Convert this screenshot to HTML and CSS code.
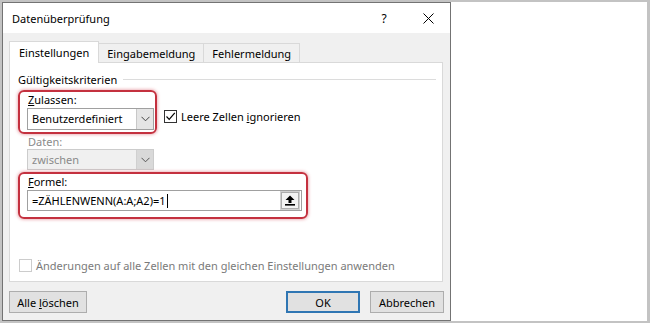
FILE: index.html
```html
<!DOCTYPE html>
<html lang="de">
<head>
    <meta charset="UTF-8" />
    <title>Datenüberprüfung</title>
    <link rel="stylesheet" href="styles.css">
</head>
<body>
    <div class="screen">
        <div class="dialog">
            <div class="titlebar">
                <span class="title">Datenüberprüfung</span>
                <span class="help">?</span>
                <span class="close">
                    <svg width="11" height="11" viewBox="0 0 11 11">
                        <path d="M0.5 0.5 L10.5 10.5 M10.5 0.5 L0.5 10.5" stroke="#000" stroke-width="1" fill="none" />
                    </svg>
                </span>
            </div>

            <div class="tabs">
                <div class="tab active">Einstellungen</div>
                <div class="tab">Eingabemeldung</div>
                <div class="tab">Fehlermeldung</div>
            </div>

            <div class="panel">
                <div class="legend">
                    <span>Gültigkeitskriterien</span>
                    <span class="legend-line"></span>
                </div>

                <div class="allow-row">
                    <div class="mark mark-allow">
                        <div class="label"><u>Z</u>ulassen:</div>
                        <div class="combo">
                            <span class="combo-text">Benutzerdefiniert</span>
                            <span class="combo-arrow">
                                <svg width="9" height="6" viewBox="0 0 9 6"><path d="M0.5 0.8 L4.5 4.8 L8.5 0.8" stroke="#444" fill="none" /></svg>
                            </span>
                        </div>
                    </div>
                    <div class="check">
                        <span class="box checked">
                            <svg width="11" height="11" viewBox="0 0 11 11"><path d="M1.5 5.5 L4.2 8.3 L9.8 1.8" stroke="#000" stroke-width="1.2" fill="none" /></svg>
                        </span>
                        <span>Leere Zellen <u>i</u>gnorieren</span>
                    </div>
                </div>

                <div class="plain">
                    <div class="label disabled">Daten:</div>
                    <div class="combo disabled">
                        <span class="combo-text">zwischen</span>
                        <span class="combo-arrow">
                            <svg width="9" height="6" viewBox="0 0 9 6"><path d="M0.5 0.8 L4.5 4.8 L8.5 0.8" stroke="#555" fill="none" /></svg>
                        </span>
                    </div>
                </div>

                <div class="mark mark-formula">
                    <div class="label"><u>F</u>ormel:</div>
                    <div class="input">
                        <span class="input-text">=ZÄHLENWENN(A:A;A2)=1</span>
                        <span class="caret"></span>
                        <span class="ref-button">
                            <svg width="10" height="11" viewBox="0 0 10 11">
                                <path d="M5 0.5 L9.5 5 L6.5 5 L6.5 8 L3.5 8 L3.5 5 L0.5 5 Z" fill="#000" />
                                <rect x="0" y="9" width="10" height="1.6" fill="#000" />
                            </svg>
                        </span>
                    </div>
                </div>

                <div class="check apply-all">
                    <span class="box disabled"></span>
                    <span>Änderungen auf alle Zellen mit den gleichen Einstellungen anwenden</span>
                </div>
            </div>

            <div class="footer">
                <button class="btn btn-wide">Alle <u>l</u>öschen</button>
                <div class="footer-right">
                    <button class="btn btn-default">OK</button>
                    <button class="btn">Abbrechen</button>
                </div>
            </div>
        </div>
    </div>
</body>
</html>
```

FILE: styles.css
```css
body,
html {
    margin: 0;
    background: #ffffff;
    font-family: "Noto Sans", "Open Sans", sans-serif;
    font-size: 11px;
    color: #000;
}

.screen {
    width: 650px;
    height: 323px;
    box-sizing: border-box;
    border: 2px solid #c3c3c3;
    border-right-width: 3px;
    background: #fff;
    display: flex;
}

.dialog {
    width: 449px;
    height: 319px;
    box-sizing: border-box;
    border: 1px solid #737373;
    background: #f0f0f0;
    display: flex;
    flex-direction: column;
}

/* titelleiste */
.titlebar {
    height: 30px;
    background: #fff;
    display: flex;
    align-items: center;
}

.title {
    padding-left: 9px;
    font-size: 11px;
}

.help,
.close {
    width: 44px;
    height: 30px;
    display: flex;
    align-items: center;
    justify-content: center;
}

.help {
    margin-left: auto;
    font-size: 12px;
}

/* reiter */
.tabs {
    display: flex;
    align-items: flex-end;
    padding-left: 6px;
    margin-top: 8px;
}

.tab {
    height: 19px;
    box-sizing: border-box;
    padding: 0 8px;
    display: flex;
    align-items: center;
    border: 1px solid #d9d9d9;
    border-bottom: none;
    background: #f0f0f0;
}

.tab + .tab {
    border-left: none;
}

.tab.active {
    height: 22px;
    padding: 0 9px;
    background: #fff;
    margin-bottom: -1px;
    position: relative;
    z-index: 1;
}

.panel {
    height: 220px;
    box-sizing: border-box;
    margin: 0 7px 0 6px;
    border: 1px solid #d9d9d9;
    background: #fff;
    display: flex;
    flex-direction: column;
}

.legend {
    display: flex;
    align-items: center;
    height: 16px;
    margin: 8px 6px 0 8px;
}

.legend-line {
    flex: 1;
    height: 1px;
    margin-left: 6px;
    background: #dcdcdc;
}

.label {
    height: 15px;
    line-height: 15px;
    padding-left: 1px;
}

.label.disabled {
    color: #8a8a8a;
}

.mark {
    border: 2px solid #c4313f;
    border-radius: 6px;
    box-shadow: 0 0 3px 1px rgba(214, 80, 95, 0.4);
    padding: 0 1px 2px 7px;
}

.mark .label {
    margin-bottom: 1px;
}

.allow-row {
    display: flex;
    align-items: flex-end;
    margin: 3px 0 0 8px;
}

.mark-allow {
    width: 127px;
}

.mark-formula {
    width: 275px;
    margin: 2px 0 0 8px;
    padding: 0 4px 6px 7px;
}

.combo {
    height: 22px;
    box-sizing: border-box;
    border: 1px solid #a0a0a0;
    background: #fff;
    display: flex;
}

.combo-text {
    flex: 1;
    padding-left: 4px;
    line-height: 20px;
}

.combo-arrow {
    width: 16px;
    border-left: 1px solid #c8c8c8;
    background: #e5e5e5;
    display: flex;
    align-items: center;
    justify-content: center;
}

.combo.disabled {
    height: 21px;
    border-color: #cccccc;
    background: #f0f0f0;
    color: #8a8a8a;
}

.combo.disabled .combo-text {
    line-height: 19px;
}

.combo.disabled .combo-arrow {
    background: #d9d9d9;
    border-left-color: #d0d0d0;
}

.plain {
    margin-left: 17px;
    width: 127px;
}

.input {
    height: 21px;
    box-sizing: border-box;
    border: 1px solid #a0a0a0;
    background: #fff;
    display: flex;
    align-items: center;
}

.input-text {
    padding-left: 4px;
}

.caret {
    width: 1px;
    height: 14px;
    margin-left: 1px;
    background: #000;
}

.ref-button {
    margin-left: auto;
    margin-right: 2px;
    width: 16px;
    height: 15px;
    border: 1px solid #adadad;
    outline: 1px solid #d0d0d0;
    background: #f3f3f3;
    display: flex;
    align-items: center;
    justify-content: center;
}

/* kontrollkaestchen */
.check {
    display: flex;
    align-items: center;
    height: 16px;
    gap: 4px;
}

.allow-row .check {
    margin: 0 0 10px 7px;
}

.box {
    width: 13px;
    height: 13px;
    box-sizing: border-box;
    border: 1px solid #333;
    background: #fff;
    display: flex;
    align-items: center;
    justify-content: center;
}

.box.disabled {
    border-color: #cccccc;
}

.apply-all {
    margin: 38px 0 0 9px;
    color: #7a7a7a;
}

/* schaltflaechen */
.footer {
    display: flex;
    margin-top: 9px;
    padding: 0 6px;
}

.footer-right {
    margin-left: auto;
    display: flex;
    gap: 10px;
}

.btn {
    width: 74px;
    height: 22px;
    box-sizing: border-box;
    border: 1px solid #adadad;
    background: #e1e1e1;
    font-family: "Noto Sans", "Open Sans", sans-serif;
    font-size: 11px;
    padding: 0;
    color: #000;
}

.btn-wide {
    width: 78px;
}

.btn-default {
    border: 2px solid #2f76b3;
}
```
